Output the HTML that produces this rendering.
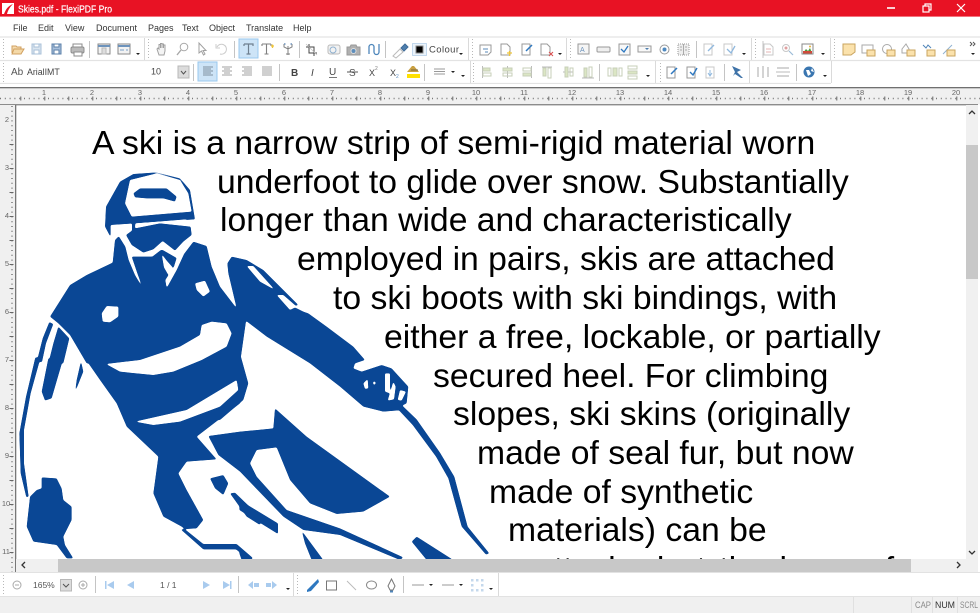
<!DOCTYPE html>
<html><head><meta charset="utf-8"><title>Skies.pdf - FlexiPDF Pro</title>
<style>
html,body{margin:0;padding:0;background:#fff}
#a{position:relative;width:980px;height:613px;overflow:hidden;background:#fff;font-family:"Liberation Sans",sans-serif}
#doc{position:absolute;left:16px;top:106px;width:950px;height:453px;overflow:hidden}
#doc span{position:absolute;white-space:nowrap;font-size:33.72px;line-height:36px;color:#000}
svg{position:absolute;left:0;top:0}
#chrome{filter:blur(.35px)}
</style></head><body><div id="a">
<svg width="980" height="613" viewBox="0 0 980 613">
<defs><filter id="sm" filterUnits="userSpaceOnUse" x="0" y="0" width="980" height="613" color-interpolation-filters="sRGB">
<feGaussianBlur stdDeviation="0.85"/>
<feComponentTransfer><feFuncR type="linear" slope="5" intercept="-2"/><feFuncG type="linear" slope="5" intercept="-2"/><feFuncB type="linear" slope="5" intercept="-2"/></feComponentTransfer>
<feComponentTransfer><feFuncR type="table" tableValues="0.043 1"/><feFuncG type="table" tableValues="0.282 1"/><feFuncB type="table" tableValues="0.588 1"/></feComponentTransfer>
</filter></defs>
<g filter="url(#sm)">
<rect width="980" height="613" fill="#fff"/>
<g fill="#000">
<g transform="translate(20 160) scale(.33333)">
<path d="M278 308 200 345 150 375 90 470 115 490 150 525 200 610 660 610 680 470 650 445 600 380 575 320 560 258 520 245 500 270 335 270 318 240 300 225 285 240Z"/>
<path d="M88 486 100 492 78 550 66 606 50 606 68 535Z"/>
<path d="M115 500 148 535 130 610 85 610 100 550Z"/>
</g>
<g transform="translate(200 240) scale(.33333)">
<path d="M82 70 95 50 140 60 190 90 295 195 280 200 310 215 325 220 380 260 460 320 495 360 465 370 460 385 485 395 545 375 575 385 625 440 620 490 600 500 610 510 550 515 490 500 420 440 330 370 200 290 115 225 110 205 85 100Z"/>
<path d="M0 15 20 40 30 90 60 150 110 210 110 260 120 340 145 430 130 480 60 540 0 540Z"/>
</g>
<g transform="translate(20 360) scale(.33333)">
<path d="M62 -8 32 100 12 210 12 310 26 410 19 412 2 340 -2 220 18 110 46 -8Z"/>
<path d="M85 -5 130 -5 95 115 75 122 65 95Z"/>
<path d="M183 3 190 35 165 97 170 60Z"/>
<path d="M195 -5 240 60 290 130 320 200 415 290 400 400 430 470 485 500 550 552 650 552 700 595 685 597 648 568 550 568 482 508 530 505 550 480 500 390 475 340 500 305 590 298 530 230 660 130 680 70 660 -5Z"/>
<path d="M570 355 610 345 625 370 610 405 585 385Z"/>
<path d="M630 400 645 398 720 470 720 495 680 470Z"/>
<path d="M65 352 110 355 125 385 130 420 155 440 155 480 130 530 135 555 160 595 140 595 110 555 40 545 20 500 30 410 50 390 65 385Z"/>
</g>
<g transform="translate(240 360) scale(.33333)">
<path d="M-95 228 0 215 100 205 105 145 200 230 450 410 370 455 290 462 210 430 150 360 110 262 50 270 30 310 50 350 140 450 300 505 490 592 480 600 300 525 190 510 130 470 0 335 -65 285Z"/>
<path d="M185 512 250 600 215 600 195 550Z"/>
<path d="M-2 420 114 490 114 522 -2 450Z"/>
<path d="M-2 565 38 600 5 600 -2 580Z"/>
<path d="M515 545 530 530 640 600 560 600Z"/>
<path d="M480 130 530 178 600 278 643 350 683 500 748 580 738 584 665 500 625 355 588 290 518 195 476 150Z"/>
</g>
</g>
<g fill="#fff">
<g transform="translate(200 240) scale(.33333)">
<path d="M140 78 160 78 225 150 180 125Z"/>
<path d="M230 165 250 165 290 200 270 210Z"/>
<path d="M490 430 503 417 505 445 495 447Z"/>
<path d="M555 400 570 400 570 460 555 455Z"/>
<path d="M563 482 580 425 587 440 582 478Z"/>
<path d="M600 450 618 455 605 482 593 480Z"/>
<path d="M519 425 527 425 526 434 520 434Z"/>
</g>
<g transform="translate(20 160) scale(.33333)">
<path d="M245 460 260 438 295 440 295 470 270 487 248 485Z"/>
<path d="M525 370 555 362 570 395 550 410 530 390Z"/>
<path d="M545 495 575 485 620 490 635 520 620 560 545 600 460 635 400 645 300 635 258 612 360 600 480 560 540 525Z"/>
</g>
<g transform="translate(20 360) scale(.33333)">
<path d="M345 185 500 150 650 60 655 90 600 140 480 185 400 195Z"/>
</g>
</g>
<g transform="translate(20 160) scale(.33333)">
<path fill="#000" d="M255 200 258 140 300 65 340 42 410 37 480 55 510 90 525 178 345 190 272 195 272 232Z"/>
<path fill="#fff" d="M315 130 330 60 410 40 480 60 505 100 515 155 335 170Z"/>
<path fill="#000" d="M340 100 360 85 440 85 470 110 465 125 430 115 380 115 345 112Z"/>
<path fill="#fff" d="M278 196 498 178 520 245 492 282 470 330 440 384 436 360 462 320 470 294 425 268 397 290 335 290 352 340 368 384 345 345 326 300 316 260 296 228 280 218Z"/>
<path fill="#000" d="M318 225 345 205 420 190 512 200 515 225 490 245 465 272 428 243 400 268 370 278 335 255Z"/>
<path fill="#000" d="M336 186 346 186 345 206 336 212Z"/>
<path fill="#fff" d="M425 282 440 302 458 322 445 345 432 322Z"/>
</g>
</g>
</svg>
<div id="doc">
<span style="left:76px;top:19px">A ski is a narrow strip of semi-rigid material worn</span>
<span style="left:201px;top:58px">underfoot to glide over snow. Substantially</span>
<span style="left:204px;top:96px">longer than wide and characteristically</span>
<span style="left:281px;top:135px">employed in pairs, skis are attached</span>
<span style="left:317px;top:174px">to ski boots with ski bindings, with</span>
<span style="left:368px;top:213px">either a free, lockable, or partially</span>
<span style="left:417px;top:252px">secured heel. For climbing</span>
<span style="left:437px;top:290px">slopes, ski skins (originally</span>
<span style="left:461px;top:329px">made of seal fur, but now</span>
<span style="left:473px;top:368px">made of synthetic</span>
<span style="left:492px;top:406px">materials) can be</span>
<span style="left:519px;top:445px;word-spacing:4px">attached at the base of</span>
</div>
<svg id="chrome" width="980" height="613" viewBox="0 0 980 613" font-family="Liberation Sans, sans-serif">
<!-- chrome backgrounds -->
<rect x="0" y="0" width="980" height="105" fill="#fff"/>
<rect x="0" y="0" width="980" height="16.5" fill="#e81224"/>
<rect x="0" y="16" width="980" height="1" fill="#f5727d"/>
<path d="M0 37H980M0 60.500H980M0 83.500H831" stroke="#e3e3e3" stroke-width="1.200"/>
<rect x="0" y="84" width="980" height="3" fill="#fff"/>
<rect x="0" y="87" width="980" height="1.400" fill="#707070"/>
<rect x="0" y="88.400" width="980" height="16" fill="#f0f0f0"/>
<rect x="0" y="104" width="978" height="1.400" fill="#8c8c8c"/>
<rect x="0" y="105" width="15" height="468" fill="#f0f0f0"/>
<rect x="15" y="105" width="1.300" height="468" fill="#777"/>
<rect x="966" y="105" width="14" height="468" fill="#f0f0f0"/>
<rect x="978" y="105" width="2" height="468" fill="#fff"/>
<rect x="966" y="145" width="12" height="134" fill="#c8c8c8"/>
<rect x="16" y="559" width="962" height="13" fill="#f0f0f0"/>
<rect x="58" y="559" width="853" height="13" fill="#c8c8c8"/>
<rect x="0" y="572" width="980" height="1" fill="#e2e2e2"/>
<rect x="0" y="573" width="980" height="24" fill="#fff"/>
<rect x="0" y="596" width="980" height="17" fill="#f0f0f0"/>
<path d="M0 596.500H980" stroke="#e2e2e2"/>
<path d="M853.500 597V613M911.500 597V613M932.500 597V613M957.500 597V613" stroke="#e0e0e0"/>
<text x="915" y="608" font-size="9.500" fill="#8a8a8a" textLength="16" lengthAdjust="spacingAndGlyphs">CAP</text>
<text x="935" y="608" font-size="9.500" fill="#333" textLength="20" lengthAdjust="spacingAndGlyphs">NUM</text>
<text x="960" y="608" font-size="9.500" fill="#8a8a8a" textLength="18" lengthAdjust="spacingAndGlyphs">SCRL</text>
<!-- scroll arrows -->
<path d="M969 114 972 111 975 114M969 551 972 554 975 551M25 562 22 565 25 568M957 562 960 565 957 568" fill="none" stroke="#333" stroke-width="1.300"/>

<!-- title -->
<rect x="2" y="3" width="12" height="11" fill="#fff"/>
<path d="M4 14C6 9 8 6 13 4 10 7 8 10 7 14Z" fill="#e81224"/>
<text x="18" y="12.500" font-size="10.500" fill="#fff" stroke="#fff" stroke-width=".2" textLength="94" lengthAdjust="spacingAndGlyphs">Skies.pdf - FlexiPDF Pro</text>
<path d="M887 8H895" stroke="#fff" stroke-width="1.600"/>
<rect x="923" y="6" width="6" height="6" fill="none" stroke="#fff" stroke-width="1.200"/>
<path d="M925 6V4H931V10H929" fill="none" stroke="#fff" stroke-width="1.200"/>
<path d="M957 4 965 12M965 4 957 12" stroke="#fff" stroke-width="1.200"/>
<!-- menu -->
<g font-size="9" fill="#333">
<text x="13" y="31">File</text><text x="38" y="31">Edit</text><text x="65" y="31">View</text><text x="96" y="31">Document</text><text x="148" y="31">Pages</text><text x="182" y="31">Text</text><text x="209" y="31">Object</text><text x="246" y="31">Translate</text><text x="293" y="31">Help</text>
</g>

<!-- separators and grips -->
<g stroke="#c4c4c4" stroke-width="1">
<path d="M89.500 41V58M234.500 41V58M299.500 41V58M385.500 41V58M696.500 41V58M763 41V58M193.500 64V81M279.500 64V81M424.500 64V81M599.500 64V81M724.500 64V81M796.500 64V81M95.500 576V593M238.500 576V593M403.500 576V593"/>
<path d="M144.500 38V60" stroke="#d8d8d8"/>
<path d="M468.500 38V60M566.500 38V60M751.500 38V60M830.500 38V60M470.500 61V83M655.500 61V83M749.500 61V83M831.500 61V83M293.500 573V596M498.500 573V596" stroke="#dadada"/>
</g>
<g stroke="#b8b8b8" stroke-width="1" stroke-dasharray="1 2">
<path d="M3.500 39V59M3.500 63V82M148.500 39V59M472.500 39V59M570.500 39V59M755.500 39V59M834.500 39V59M473.500 63V82M660.500 63V82M3.500 575V595M297.500 575V595"/>
</g>
<!-- dropdown ticks -->
<g fill="#222">
<path d="M136 53H140L138 55ZM459 53H463L461 55ZM558 53H562L560 55ZM742 53H746L744 55ZM821 53H825L823 55ZM971 53H975L973 55ZM461 75H465L463 77ZM646 75H650L648 77ZM823 75H827L825 77ZM451 71H455L453 73ZM286 588H290L288 590ZM489 588H493L491 590ZM429 584H433L431 586ZM459 584H463L461 586Z"/>
</g>

<!-- Row 1 icons -->
<g fill="none" stroke="#8c8c8c" stroke-width="1">
<path d="M12 53V46H16L17 47H21V49" stroke="#d0a060" fill="#f6dcb0"/>
<path d="M12 54 14 49H24L21 54Z" stroke="#d0a060" fill="#f4d9a8"/>
<path d="M32 44H41V54H32Z" stroke="#a9c0d8" fill="#dbe6f0"/><rect x="34" y="44" width="5" height="3" fill="#fff" stroke="#a9c0d8"/><rect x="34" y="50" width="5" height="4" fill="#fff" stroke="#a9c0d8"/>
<path d="M52 44H61V54H52Z" stroke="#5a7fa8" fill="#a9c0dc"/><rect x="54" y="44" width="5" height="3" fill="#fff" stroke="#5a7fa8"/><rect x="54" y="50" width="5" height="4" fill="#fff" stroke="#5a7fa8"/>
<rect x="71" y="47" width="13" height="6" rx="1.500" fill="#bbb"/><rect x="73" y="44" width="9" height="3" fill="#fff"/><rect x="74" y="52" width="8" height="4" fill="#fff"/>
<rect x="98" y="44" width="12" height="10" stroke="#8a8a8a" fill="#f2f2f2"/><path d="M98 46H110" stroke="#6d93bc" stroke-width="2"/><rect x="102" y="48" width="4" height="6" fill="#ddd" stroke="#bbb"/>
<rect x="118" y="44" width="12" height="10" stroke="#8a8a8a" fill="#f2f2f2"/><path d="M118 46H130" stroke="#6d93bc" stroke-width="2"/><path d="M120 50H124M126 50H128" stroke="#7ba0c8"/>
<path d="M159 55 157 49 158 48 159 49V44.500H160.500V48 43.500H162V48 44H163.500V48 45H165V51L164 55Z" stroke="#a0a0a0" fill="#f4f4f4"/>
<circle cx="184" cy="47" r="3.800" stroke="#a8a8a8"/><path d="M181 50 177 55" stroke="#a8a8a8" stroke-width="1.400"/>
<path d="M199 43V53L201.500 51 203.500 55 205 54 203 50.500H206Z" stroke="#a0a0a0" fill="#fff"/>
<path d="M217 47A5 5 0 1 1 220 54" stroke="#ccc"/><path d="M216 44V48H220" stroke="#ccc"/>
<rect x="239" y="39" width="19" height="19" fill="#cde4f7" stroke="#99c8ef"/>
<path d="M244 44H253V46M248.500 44V54M246.500 54H250.500M244 44V46" stroke="#6f7f8f" stroke-width="1.200"/>
<path d="M262 44H271M266.500 44V54M264.500 54H268.500M262 44V46M271 44V46" stroke="#808080" stroke-width="1.100"/><path d="M271 46H274M272.500 44.500V48" stroke="#eec53c" stroke-width="1.300"/>
<path d="M288 46V55M286 54H290M284 44V47L288 49 292 47V44" stroke="#7f7f7f"/><path d="M284 44H285.500M290.500 44H292" stroke="#6d93bc" stroke-width="1.500"/>
<path d="M309 44V53H317M306 47H314V56" stroke="#444"/><path d="M306 44 317 55" stroke="#c0c0c0" stroke-width=".7"/>
<rect x="328" y="45" width="12" height="9" rx="2" stroke="#bbb" fill="#f2f2f2"/><circle cx="333" cy="50" r="3" stroke="#8fb1d0"/>
<path d="M347 47H350L351 45H356L357 47H360V55H347Z" fill="#b0b0b0" stroke="#999"/><circle cx="353.500" cy="51" r="2.500" fill="#5d8dbb" stroke="#ddd"/>
<path d="M369 54V47A2.500 2.500 0 0 1 374 47V52A2.500 2.500 0 0 0 379 52V44" stroke="#4e86bb" stroke-width="1.300"/>
<path d="M393 56 400 49 403 52 396 58Z" stroke="#bbb" fill="#fff"/><path d="M401 48 405 44 408 47 404 51Z" fill="#4f7fae" stroke="#3e6b98"/>
<rect x="412.500" y="43.500" width="14" height="12" stroke="#8db5da" stroke-dasharray="1 1" fill="#eaf3fb"/><rect x="416" y="46" width="7" height="7" fill="#000"/>
</g>
<text x="429" y="52.500" font-size="9.500" fill="#444" letter-spacing=".4">Colour</text>
<g fill="#fff" stroke="#999" stroke-width="1">
<path d="M480 45H491V52L488 55H480Z"/><path d="M483 49H488M485 52H488" stroke="#5889b8"/>
<path d="M501 44H507L510 47V55H501Z"/><path d="M507 53H512M509.500 51V56" stroke="#eec53c" stroke-width="1.300"/>
<path d="M522 44H530V55H522Z"/><path d="M526 51 532 45" stroke="#2e78c0" stroke-width="1.500"/>
<path d="M541 44H547L550 47V55H541Z"/><path d="M549 52 553 56M553 52 549 56" stroke="#d94f4f"/>
<rect x="578" y="44" width="11" height="10" fill="#f5f5f5"/><text x="580" y="52" font-size="7" fill="#6d93bc" stroke="none">A</text>
<rect x="597" y="47" width="13" height="5" rx="1" fill="#efefef"/>
<rect x="619" y="44" width="11" height="11" fill="#f8f8f8"/><path d="M621 49 624 52 628 46" stroke="#2e78c0" stroke-width="1.300" fill="none"/>
<rect x="638" y="46" width="13" height="6" fill="#f8f8f8"/><path d="M645 48H649L647 50Z" fill="#4f7fae" stroke="none"/>
<circle cx="664.500" cy="49.500" r="4.500" fill="#fff"/><circle cx="664.500" cy="49.500" r="2" fill="#4f89c0" stroke="none"/>
<rect x="678" y="44" width="11" height="11" fill="#eee" stroke-dasharray="1 1"/><path d="M683.500 44V55M680 47H682M680 50H682M685 47H687M685 50H687" stroke="#aaa" fill="none"/>
<g stroke="#c8c8c8">
<path d="M704 44H712V55H704Z"/><path d="M708 51 714 45" stroke="#8fb8de" stroke-width="1.300" fill="none"/>
<path d="M724 44H732V55H724Z"/><path d="M727 49 731 53 735 46" stroke="#8fb8de" stroke-width="1.300" fill="none"/>
<path d="M764 44H770L773 47V55H764Z"/><path d="M766 49H771M766 52H771" stroke="#e6b5b5"/>
</g>
<circle cx="786" cy="48" r="3.500" stroke="#c8c8c8"/><circle cx="786" cy="48" r="1.500" fill="#e0a0a0" stroke="none"/><path d="M789 51 793 55" stroke="#9dbcd8" stroke-width="1.200"/>
<rect x="802" y="44" width="11" height="10" stroke="#888"/><path d="M803 53 806 49 808 51 810 48 812 53Z" fill="#4a9a3a" stroke="none"/><rect x="803" y="51" width="9" height="2.500" fill="#cf4a3a" stroke="none"/><circle cx="810" cy="46.500" r="1" fill="#e9b13c" stroke="none"/>
<g stroke="#c9a45f">
<path d="M843 44H855V52L851 55H843Z" fill="#fbe2ac"/>
<path d="M862 45H873V53H862Z" fill="#fff" stroke="#aaa"/><rect x="867" y="50" width="8" height="6" fill="#fbe2ac"/>
<circle cx="887" cy="49" r="4.500" fill="#fff" stroke="#aaa"/><rect x="887" y="50" width="8" height="6" fill="#fbe2ac"/>
<path d="M902 53V49L906 44 909 49V53Z" fill="#fff" stroke="#aaa"/><rect x="907" y="50" width="8" height="6" fill="#fbe2ac"/>
<path d="M923 45 926 48 928 45 931 48" fill="none" stroke="#4f84b8"/><rect x="927" y="50" width="8" height="6" fill="#fbe2ac"/>
<path d="M943 54 952 45" stroke="#8fb1d0" fill="none"/><rect x="947" y="50" width="8" height="6" fill="#fbe2ac"/>
</g>
</g>
<path d="M970 42 972 44 970 46M973 42 975 44 973 46" fill="none" stroke="#555"/>

<!-- Row 2 -->
<text x="11" y="75" font-size="10" fill="#555">Ab</text>
<text x="27" y="75" font-size="8.800" fill="#444">ArialIMT</text>
<text x="151" y="74.500" font-size="9" fill="#444">10</text>
<rect x="178" y="66" width="11" height="12" fill="#dcdcdc" stroke="#b8b8b8"/>
<path d="M181 71 183.500 74 186 71" fill="none" stroke="#555"/>
<rect x="198" y="62" width="19" height="19" fill="#cde4f7" stroke="#99c8ef"/>
<g stroke="#7f8f9f" stroke-width="1">
<path d="M203 67H213M203 69H211M203 71H213M203 73H211M203 75H213"/>
</g>
<g stroke="#a0a0a0" stroke-width="1">
<path d="M222 67H232M224 69H230M222 71H232M224 73H230M222 75H232"/>
<path d="M242 67H252M244 69H252M242 71H252M244 73H252M242 75H252"/>
<path d="M262 67H272M262 69H272M262 71H272M262 73H272M262 75H272"/>
</g>
<text x="291" y="76" font-size="10" font-weight="bold" fill="#444">B</text>
<text x="311" y="76" font-size="10" font-style="italic" fill="#444">I</text>
<text x="329" y="75" font-size="10" fill="#444">U</text><path d="M329 77.500H337" stroke="#777"/>
<text x="349" y="76" font-size="10" fill="#555">S</text><path d="M347 72H358" stroke="#555"/>
<text x="369" y="76" font-size="9" fill="#444">X</text><text x="375" y="70" font-size="5" fill="#7f7f7f">2</text>
<text x="390" y="76" font-size="9" fill="#444">X</text><text x="396" y="78" font-size="5" fill="#5f8fc0">2</text>
<path d="M407 72 412 66 414 66 419 72Z" fill="#c9a042"/><path d="M411 70H418" stroke="#7a6a3a"/><rect x="407" y="74" width="13" height="4" fill="#ffe000"/>
<path d="M434 69H445M434 71.500H445M434 74H445" stroke="#999"/>
<!-- align group (faded) -->
<g fill="none" stroke="#c7cfb8" stroke-width="1">
<path d="M482.500 66V78" stroke="#bbb"/><rect x="483" y="68" width="7" height="3" fill="#dbe6c4"/><rect x="483" y="73" width="8" height="3"/>
<path d="M507.500 66V78" stroke="#bbb"/><rect x="503" y="68" width="9" height="3" fill="#dbe6c4"/><rect x="503" y="73" width="9" height="3"/>
<path d="M531.500 66V78" stroke="#bbb"/><rect x="523" y="68" width="8" height="3"/><rect x="523" y="73" width="8" height="3" fill="#dbe6c4"/>
<path d="M542 67H552" stroke="#bbb"/><rect x="543" y="68" width="3" height="8" fill="#dbe6c4"/><rect x="548" y="68" width="3" height="10"/>
<path d="M563 72H573" stroke="#bbb"/><rect x="565" y="67" width="3" height="10" fill="#dbe6c4"/><rect x="570" y="68" width="3" height="8"/>
<path d="M582 78H594" stroke="#bbb"/><rect x="584" y="68" width="3" height="9" fill="#dbe6c4"/><rect x="589" y="67" width="3" height="10"/>
<rect x="608" y="68" width="3" height="8"/><rect x="613" y="68" width="4" height="8" fill="#dbe6c4"/><rect x="619" y="68" width="3" height="8"/>
<rect x="628" y="66" width="9" height="3"/><rect x="628" y="71" width="9" height="3" fill="#dbe6c4"/><rect x="628" y="76" width="9" height="3"/>
</g>
<g fill="#fff" stroke="#999">
<path d="M667 67H675V78H667Z"/><path d="M671 74 677 68" stroke="#2e78c0" stroke-width="1.500"/>
<path d="M687 67H695V78H687Z"/><path d="M690 72 693 75 697 68" stroke="#2e78c0" stroke-width="1.400" fill="none"/>
<path d="M706 67H714V78H706Z" stroke="#c8c8c8"/><path d="M710 70V75M708 73 710 76 712 73" stroke="#8fb8de" fill="none"/>
</g>
<path d="M732 66 741 70 737 72 743 78 741 78 735 74 733 76 735 72Z" fill="#3f73a8"/>
<path d="M758 67V77M768 67V77M763 66V78" stroke="#d4d4d4" stroke-width="2"/>
<path d="M777 68H789M777 76H789" stroke="#d4d4d4" stroke-width="2"/><path d="M776 72H790" stroke="#bbb"/>
<circle cx="809" cy="72" r="5.500" fill="#3a76b0"/><path d="M806 70H809L811 74 808 76ZM812 68 814 72 811 71Z" fill="#fff"/>

<!-- bottom toolbar -->
<g fill="none" stroke="#aaa">
<circle cx="17" cy="585" r="4"/><path d="M15 585H19"/>
<circle cx="83" cy="585" r="4"/><path d="M81 585H85M83 583V587"/>
</g>
<text x="33" y="588" font-size="8.500" fill="#555">165%</text>
<rect x="60.500" y="579.500" width="11" height="11.500" fill="#dcdcdc" stroke="#b8b8b8"/>
<path d="M63 584 66 587 69 584" fill="none" stroke="#555"/>
<g fill="#a9cbee">
<rect x="105" y="581" width="1.500" height="8"/><path d="M114 581V589L107 585Z"/>
<path d="M134 581V589L127 585Z"/>
<path d="M203 581V589L210 585Z"/>
<path d="M223 581V589L230 585Z"/><rect x="230" y="581" width="1.500" height="8"/>
<path d="M248 585 253 581V589ZM254 583H259V587H254Z"/>
<path d="M277 585 272 581V589ZM271 583H266V587H271Z"/>
</g>
<text x="160" y="588" font-size="8.500" fill="#555">1 / 1</text>
<path d="M307 590 315 582 318 579 319 582 311 591 307 592Z" fill="#2e78c0"/>
<rect x="326.500" y="581" width="10" height="9" fill="none" stroke="#777"/>
<path d="M347 581 356 590" stroke="#bbb"/>
<ellipse cx="371.500" cy="585" rx="5" ry="4" fill="none" stroke="#888"/>
<path d="M391.500 579 395 586 393 590H390L388 586Z" fill="none" stroke="#777"/><path d="M390 591.500H393" stroke="#4f84b8" stroke-width="2"/>
<path d="M412 585H424M442 585H454" stroke="#999"/>
<g fill="#c4d8ec"><rect x="471" y="579" width="2.500" height="2.500"/><rect x="476" y="579" width="2.500" height="2.500"/><rect x="481" y="579" width="2.500" height="2.500"/><rect x="471" y="584" width="2.500" height="2.500"/><rect x="481" y="584" width="2.500" height="2.500"/><rect x="471" y="589" width="2.500" height="2.500"/><rect x="476" y="589" width="2.500" height="2.500"/><rect x="481" y="589" width="2.500" height="2.500"/></g>

<!-- rulers -->
<path d="M0 98.500H980" stroke="#777" stroke-width="1.500" stroke-dasharray="1 3.800"/>
<path d="M20.300 98.500H980" stroke="#666" stroke-width="4" stroke-dasharray="1 23"/>
<g font-size="7.500" fill="#666" text-anchor="middle">
<text x="44" y="95">1</text><text x="92" y="95">2</text><text x="140" y="95">3</text><text x="188" y="95">4</text><text x="236" y="95">5</text><text x="284" y="95">6</text><text x="332" y="95">7</text><text x="380" y="95">8</text><text x="428" y="95">9</text><text x="476" y="95">10</text><text x="524" y="95">11</text><text x="572" y="95">12</text><text x="620" y="95">13</text><text x="668" y="95">14</text><text x="716" y="95">15</text><text x="764" y="95">16</text><text x="812" y="95">17</text><text x="860" y="95">18</text><text x="908" y="95">19</text><text x="956" y="95">20</text>
</g>
<path d="M12 106V572" stroke="#777" stroke-width="1.500" stroke-dasharray="1 3.800"/>
<path d="M11.500 144V572" stroke="#666" stroke-width="4" stroke-dasharray="1 23"/>
<g font-size="7.500" fill="#666" text-anchor="middle">
<text x="7" y="122">2</text><text x="7" y="170">3</text><text x="7" y="218">4</text><text x="7" y="266">5</text><text x="7" y="314">6</text><text x="7" y="362">7</text><text x="7" y="410">8</text><text x="7" y="458">9</text><text x="6" y="506">10</text><text x="6" y="554">11</text>
</g>
</svg>
</div></body></html>
